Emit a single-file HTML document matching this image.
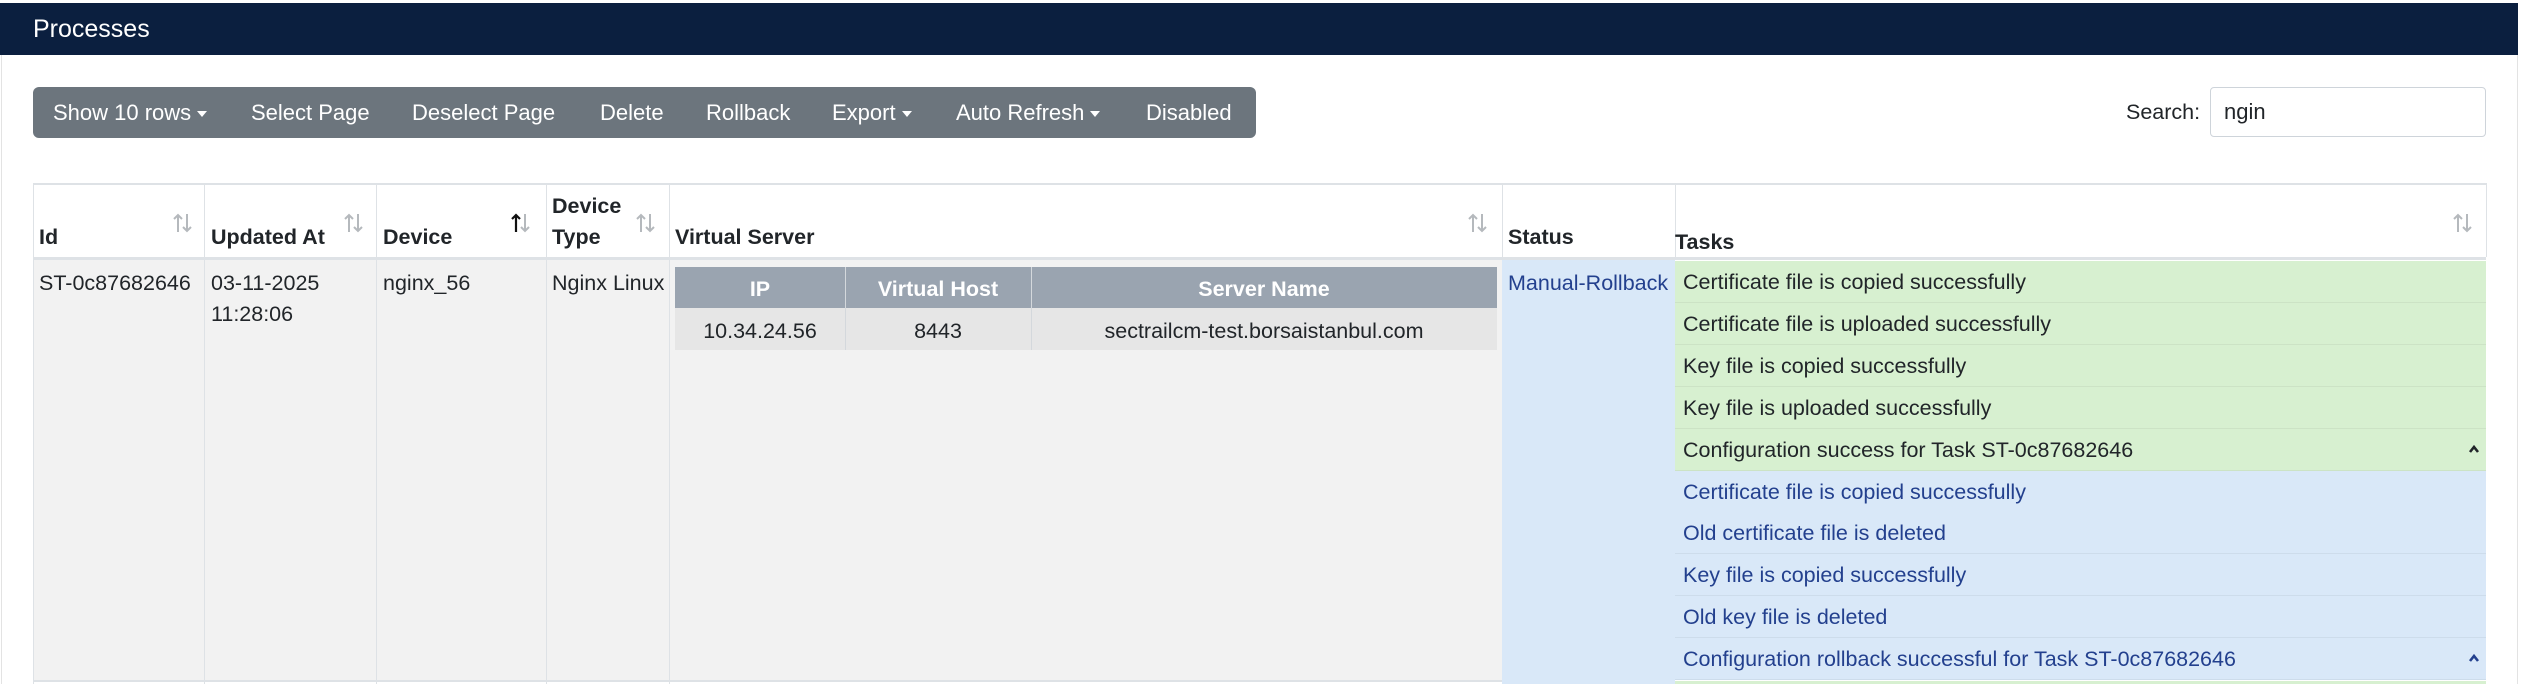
<!DOCTYPE html>
<html><head><meta charset="utf-8"><style>
*{box-sizing:border-box;margin:0;padding:0}
html,body{width:2522px;height:684px;overflow:hidden}
body{background:#fff;font-family:"Liberation Sans",sans-serif;color:#212529;font-size:21.5px;position:relative}
.a{position:absolute;white-space:nowrap}
.hdr{left:0;top:3px;width:2518px;height:52px;background:#0b1f3f;color:#fff;font-size:25px;line-height:52px;padding-left:33px}
.card{left:1px;top:3px;width:2517px;height:681px;border:1px solid #e3e3e3;border-bottom:none}
.tb{left:33px;top:87px;width:1223px;height:51px;background:#6c757d;border-radius:6px}
.bt{color:#fff;top:87px;line-height:51px;font-size:22px}
.car{display:inline-block;border-left:5px solid transparent;border-right:5px solid transparent;border-top:6px solid #fff;vertical-align:middle;margin-left:6px}
.th{font-weight:bold;font-size:21.5px}
.vl{position:absolute;width:1px;background:#dee2e6}
.task{left:1675px;width:811px;height:42px;line-height:43px;padding-left:8px;border-bottom:1px solid rgba(0,0,0,.05);font-size:21.5px}
.g{background:#d7f0d0;color:#212529}
.b{background:#d9e8f8;color:#23408e}
.up{position:absolute;right:6px;top:15px}
</style></head><body>
<div class="a card"></div>
<div class="a hdr">Processes</div>
<div class="a tb"></div>
<div class="a bt" style="left:53px">Show 10 rows<span class="car"></span></div>
<div class="a bt" style="left:251px">Select Page</div>
<div class="a bt" style="left:412px">Deselect Page</div>
<div class="a bt" style="left:600px">Delete</div>
<div class="a bt" style="left:706px">Rollback</div>
<div class="a bt" style="left:832px">Export<span class="car"></span></div>
<div class="a bt" style="left:956px">Auto Refresh<span class="car"></span></div>
<div class="a bt" style="left:1146px">Disabled</div>
<div class="a" style="left:2126px;top:87px;line-height:51px;font-size:21.5px">Search:</div>
<div class="a" style="left:2210px;top:87px;width:276px;height:50px;border:1px solid #ced4da;border-radius:4px;line-height:48px;padding-left:13px;font-size:22px">ngin</div>

<div class="a" style="left:33px;top:183px;width:2453px;height:2px;background:#dee2e6"></div>
<div class="a" style="left:33px;top:257px;width:2453px;height:3px;background:#dee2e6"></div>
<div class="a" style="left:33px;top:260px;width:1469px;height:420px;background:#f2f2f2"></div>
<div class="a" style="left:1502px;top:260px;width:173px;height:424px;background:#d9e8f8"></div>
<div class="a" style="left:33px;top:680px;width:1469px;height:2px;background:#dee2e6"></div>
<div class="vl" style="left:33px;top:183px;height:501px"></div>
<div class="vl" style="left:204px;top:183px;height:501px"></div>
<div class="vl" style="left:376px;top:183px;height:501px"></div>
<div class="vl" style="left:546px;top:183px;height:501px"></div>
<div class="vl" style="left:669px;top:183px;height:501px"></div>
<div class="vl" style="left:1502px;top:183px;height:74px"></div>
<div class="vl" style="left:1675px;top:183px;height:74px"></div>
<div class="vl" style="left:2486px;top:183px;height:74px"></div>

<div class="a th" style="left:39px;top:225px">Id</div>
<div class="a th" style="left:211px;top:225px">Updated At</div>
<div class="a th" style="left:383px;top:225px">Device</div>
<div class="a th" style="left:552px;top:194px">Device</div>
<div class="a th" style="left:552px;top:225px">Type</div>
<div class="a th" style="left:675px;top:225px">Virtual Server</div>
<div class="a th" style="left:1508px;top:225px">Status</div>
<div class="a th" style="left:1675px;top:230px">Tasks</div>

<svg class="a" style="left:172px;top:212px" width="22" height="22" viewBox="0 0 22 22"><path d="M6 20V3M2 7l4-4 4 4M15 2v17M11 15l4 4 4-4" stroke="#b5b9bd" stroke-width="2" fill="none"/></svg>
<svg class="a" style="left:343px;top:212px" width="22" height="22" viewBox="0 0 22 22"><path d="M6 20V3M2 7l4-4 4 4M15 2v17M11 15l4 4 4-4" stroke="#b5b9bd" stroke-width="2" fill="none"/></svg>
<svg class="a" style="left:510px;top:212px" width="22" height="22" viewBox="0 0 22 22"><path d="M6 20V3M2 7l4-4 4 4" stroke="#111" stroke-width="2.2" fill="none"/><path d="M15 2v17M11 15l4 4 4-4" stroke="#b5b9bd" stroke-width="2" fill="none"/></svg>
<svg class="a" style="left:635px;top:212px" width="22" height="22" viewBox="0 0 22 22"><path d="M6 20V3M2 7l4-4 4 4M15 2v17M11 15l4 4 4-4" stroke="#b5b9bd" stroke-width="2" fill="none"/></svg>
<svg class="a" style="left:1467px;top:212px" width="22" height="22" viewBox="0 0 22 22"><path d="M6 20V3M2 7l4-4 4 4M15 2v17M11 15l4 4 4-4" stroke="#b5b9bd" stroke-width="2" fill="none"/></svg>
<svg class="a" style="left:2452px;top:212px" width="22" height="22" viewBox="0 0 22 22"><path d="M6 20V3M2 7l4-4 4 4M15 2v17M11 15l4 4 4-4" stroke="#b5b9bd" stroke-width="2" fill="none"/></svg>

<div class="a" style="left:39px;top:271px">ST-0c87682646</div>
<div class="a" style="left:211px;top:271px">03-11-2025</div>
<div class="a" style="left:211px;top:302px">11:28:06</div>
<div class="a" style="left:383px;top:271px">nginx_56</div>
<div class="a" style="left:552px;top:271px">Nginx Linux</div>
<div class="a" style="left:1508px;top:271px;color:#23408e">Manual-Rollback</div>

<div class="a" style="left:675px;top:267px;width:822px;height:41px;background:#9aa4b0"></div>
<div class="a" style="left:675px;top:308px;width:822px;height:42px;background:#e6e6e6"></div>
<div class="vl" style="left:845px;top:267px;height:83px;background:#d4d8dc"></div>
<div class="vl" style="left:1031px;top:267px;height:83px;background:#d4d8dc"></div>
<div class="a th" style="left:675px;width:170px;text-align:center;top:277px;color:#fff">IP</div>
<div class="a th" style="left:845px;width:186px;text-align:center;top:277px;color:#fff">Virtual Host</div>
<div class="a th" style="left:1031px;width:466px;text-align:center;top:277px;color:#fff">Server Name</div>
<div class="a" style="left:675px;width:170px;text-align:center;top:319px">10.34.24.56</div>
<div class="a" style="left:845px;width:186px;text-align:center;top:319px">8443</div>
<div class="a" style="left:1031px;width:466px;text-align:center;top:319px">sectrailcm-test.borsaistanbul.com</div>

<div class="a task g" style="top:261px">Certificate file is copied successfully</div>
<div class="a task g" style="top:303px">Certificate file is uploaded successfully</div>
<div class="a task g" style="top:345px">Key file is copied successfully</div>
<div class="a task g" style="top:387px">Key file is uploaded successfully</div>
<div class="a task g" style="top:429px">Configuration success for Task ST-0c87682646<svg class="up" width="12" height="10" viewBox="0 0 12 10"><path d="M2 8l4-5 4 5" stroke="#212529" stroke-width="2.6" fill="none"/></svg></div>
<div class="a task b" style="top:471px">Certificate file is copied successfully</div>
<div class="a task b" style="top:512px">Old certificate file is deleted</div>
<div class="a task b" style="top:554px">Key file is copied successfully</div>
<div class="a task b" style="top:596px">Old key file is deleted</div>
<div class="a task b" style="top:638px">Configuration rollback successful for Task ST-0c87682646<svg class="up" width="12" height="10" viewBox="0 0 12 10"><path d="M2 8l4-5 4 5" stroke="#23408e" stroke-width="2.6" fill="none"/></svg></div>
<div class="a g" style="left:1675px;top:681px;width:811px;height:3px"></div>
</body></html>
